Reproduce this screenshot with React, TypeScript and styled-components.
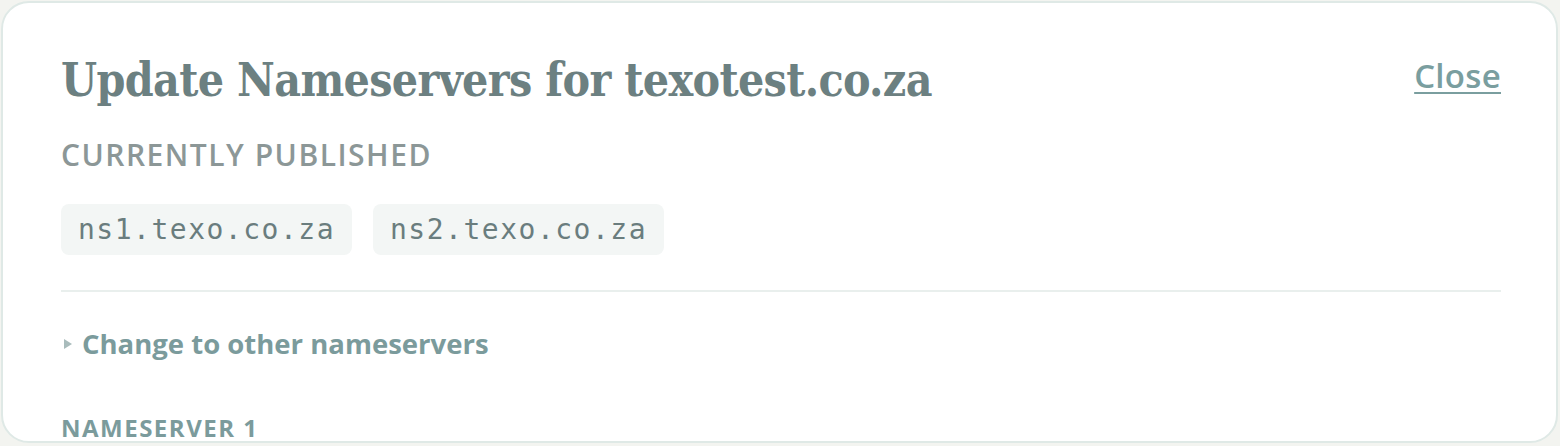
import styled, { createGlobalStyle } from 'styled-components';

const GlobalStyle = createGlobalStyle`
  html, body {
    margin: 0;
    padding: 0;
    background: #f3f4f0;
  }

  body {
    padding: 1px 2px 0 1px;
  }
`;

const Modal = styled.section`
  box-sizing: border-box;
  height: 442px;
  overflow: hidden;

  background: #ffffff;
  border: 2px solid #dfe9e6;
  border-radius: 28px;

  padding: 42px 55px 0 58px;
`;

const Header = styled.header`
  display: flex;
  justify-content: space-between;
  align-items: flex-start;
  margin-bottom: 22px;
`;

const Title = styled.h1`
  margin: 0;
  font-family: "DejaVu Serif Condensed", "DejaVu Serif", serif;
  font-weight: 700;
  font-size: 46px;
  line-height: 70px;
  color: #6c8081;
  letter-spacing: -0.65px;
`;

const CloseLink = styled.a`
  margin-top: 11px;
  font-family: "Open Sans", sans-serif;
  font-weight: 600;
  font-size: 33px;
  line-height: 40px;
  letter-spacing: 0.3px;
  color: #7a9e9f;
  text-decoration: underline;
  text-decoration-thickness: 2px;
  text-underline-offset: 4px;
  cursor: pointer;
`;

const SectionLabel = styled.h2<{ $size: number; $tone?: 'grey' | 'teal' }>`
  margin: 0;
  font-family: "Open Sans", sans-serif;
  font-weight: ${({ $tone }) => ($tone === 'teal' ? 700 : 600)};
  font-size: ${({ $size }) => $size}px;
  line-height: 36px;
  letter-spacing: 1.5px;
  text-transform: uppercase;
  color: ${({ $tone }) => ($tone === 'teal' ? '#7b9b9c' : '#8c9797')};
`;

const ChipRow = styled.div`
  display: flex;
  gap: 21px;
  margin-top: 31px;
`;

const Chip = styled.code`
  display: inline-flex;
  align-items: center;
  height: 51px;
  padding: 0 17px;
  border-radius: 8px;
  background: #f3f6f5;

  font-family: "DejaVu Sans Mono", monospace;
  font-size: 28px;
  letter-spacing: 1.5px;
  color: #6a7d7e;
`;

const Divider = styled.hr`
  border: 0;
  height: 2px;
  background: #e9efed;
  margin: 35px 0 0;
`;

const Toggle = styled.button`
  display: flex;
  align-items: center;
  gap: 10px;
  margin-top: 34px;
  padding: 0;
  border: 0;
  background: none;
  cursor: pointer;

  font-family: "Open Sans", sans-serif;
  font-weight: 700;
  font-size: 27.5px;
  line-height: 36px;
  color: #7b9b9c;
`;

const Caret = styled.span`
  width: 0;
  height: 0;
  margin-left: 3px;
  border-top: 5px solid transparent;
  border-bottom: 5px solid transparent;
  border-left: 8px solid #a9bcbc;
`;

const FieldGroup = styled.div`
  margin-top: 48px;
`;

export default function App() {
  const published = ['ns1.texo.co.za', 'ns2.texo.co.za'];

  return (
    <>
      <GlobalStyle />
      <Modal role="dialog" aria-labelledby="ns-modal-title">
        <Header>
          <Title id="ns-modal-title">Update Nameservers for texotest.co.za</Title>
          <CloseLink>Close</CloseLink>
        </Header>

        <SectionLabel $size={30}>Currently Published</SectionLabel>
        <ChipRow>
          {published.map((ns) => (
            <Chip key={ns}>{ns}</Chip>
          ))}
        </ChipRow>

        <Divider />

        <Toggle type="button">
          <Caret />
          Change to other nameservers
        </Toggle>

        <FieldGroup>
          <SectionLabel $size={24} $tone="teal">Nameserver 1</SectionLabel>
        </FieldGroup>
      </Modal>
    </>
  );
}
